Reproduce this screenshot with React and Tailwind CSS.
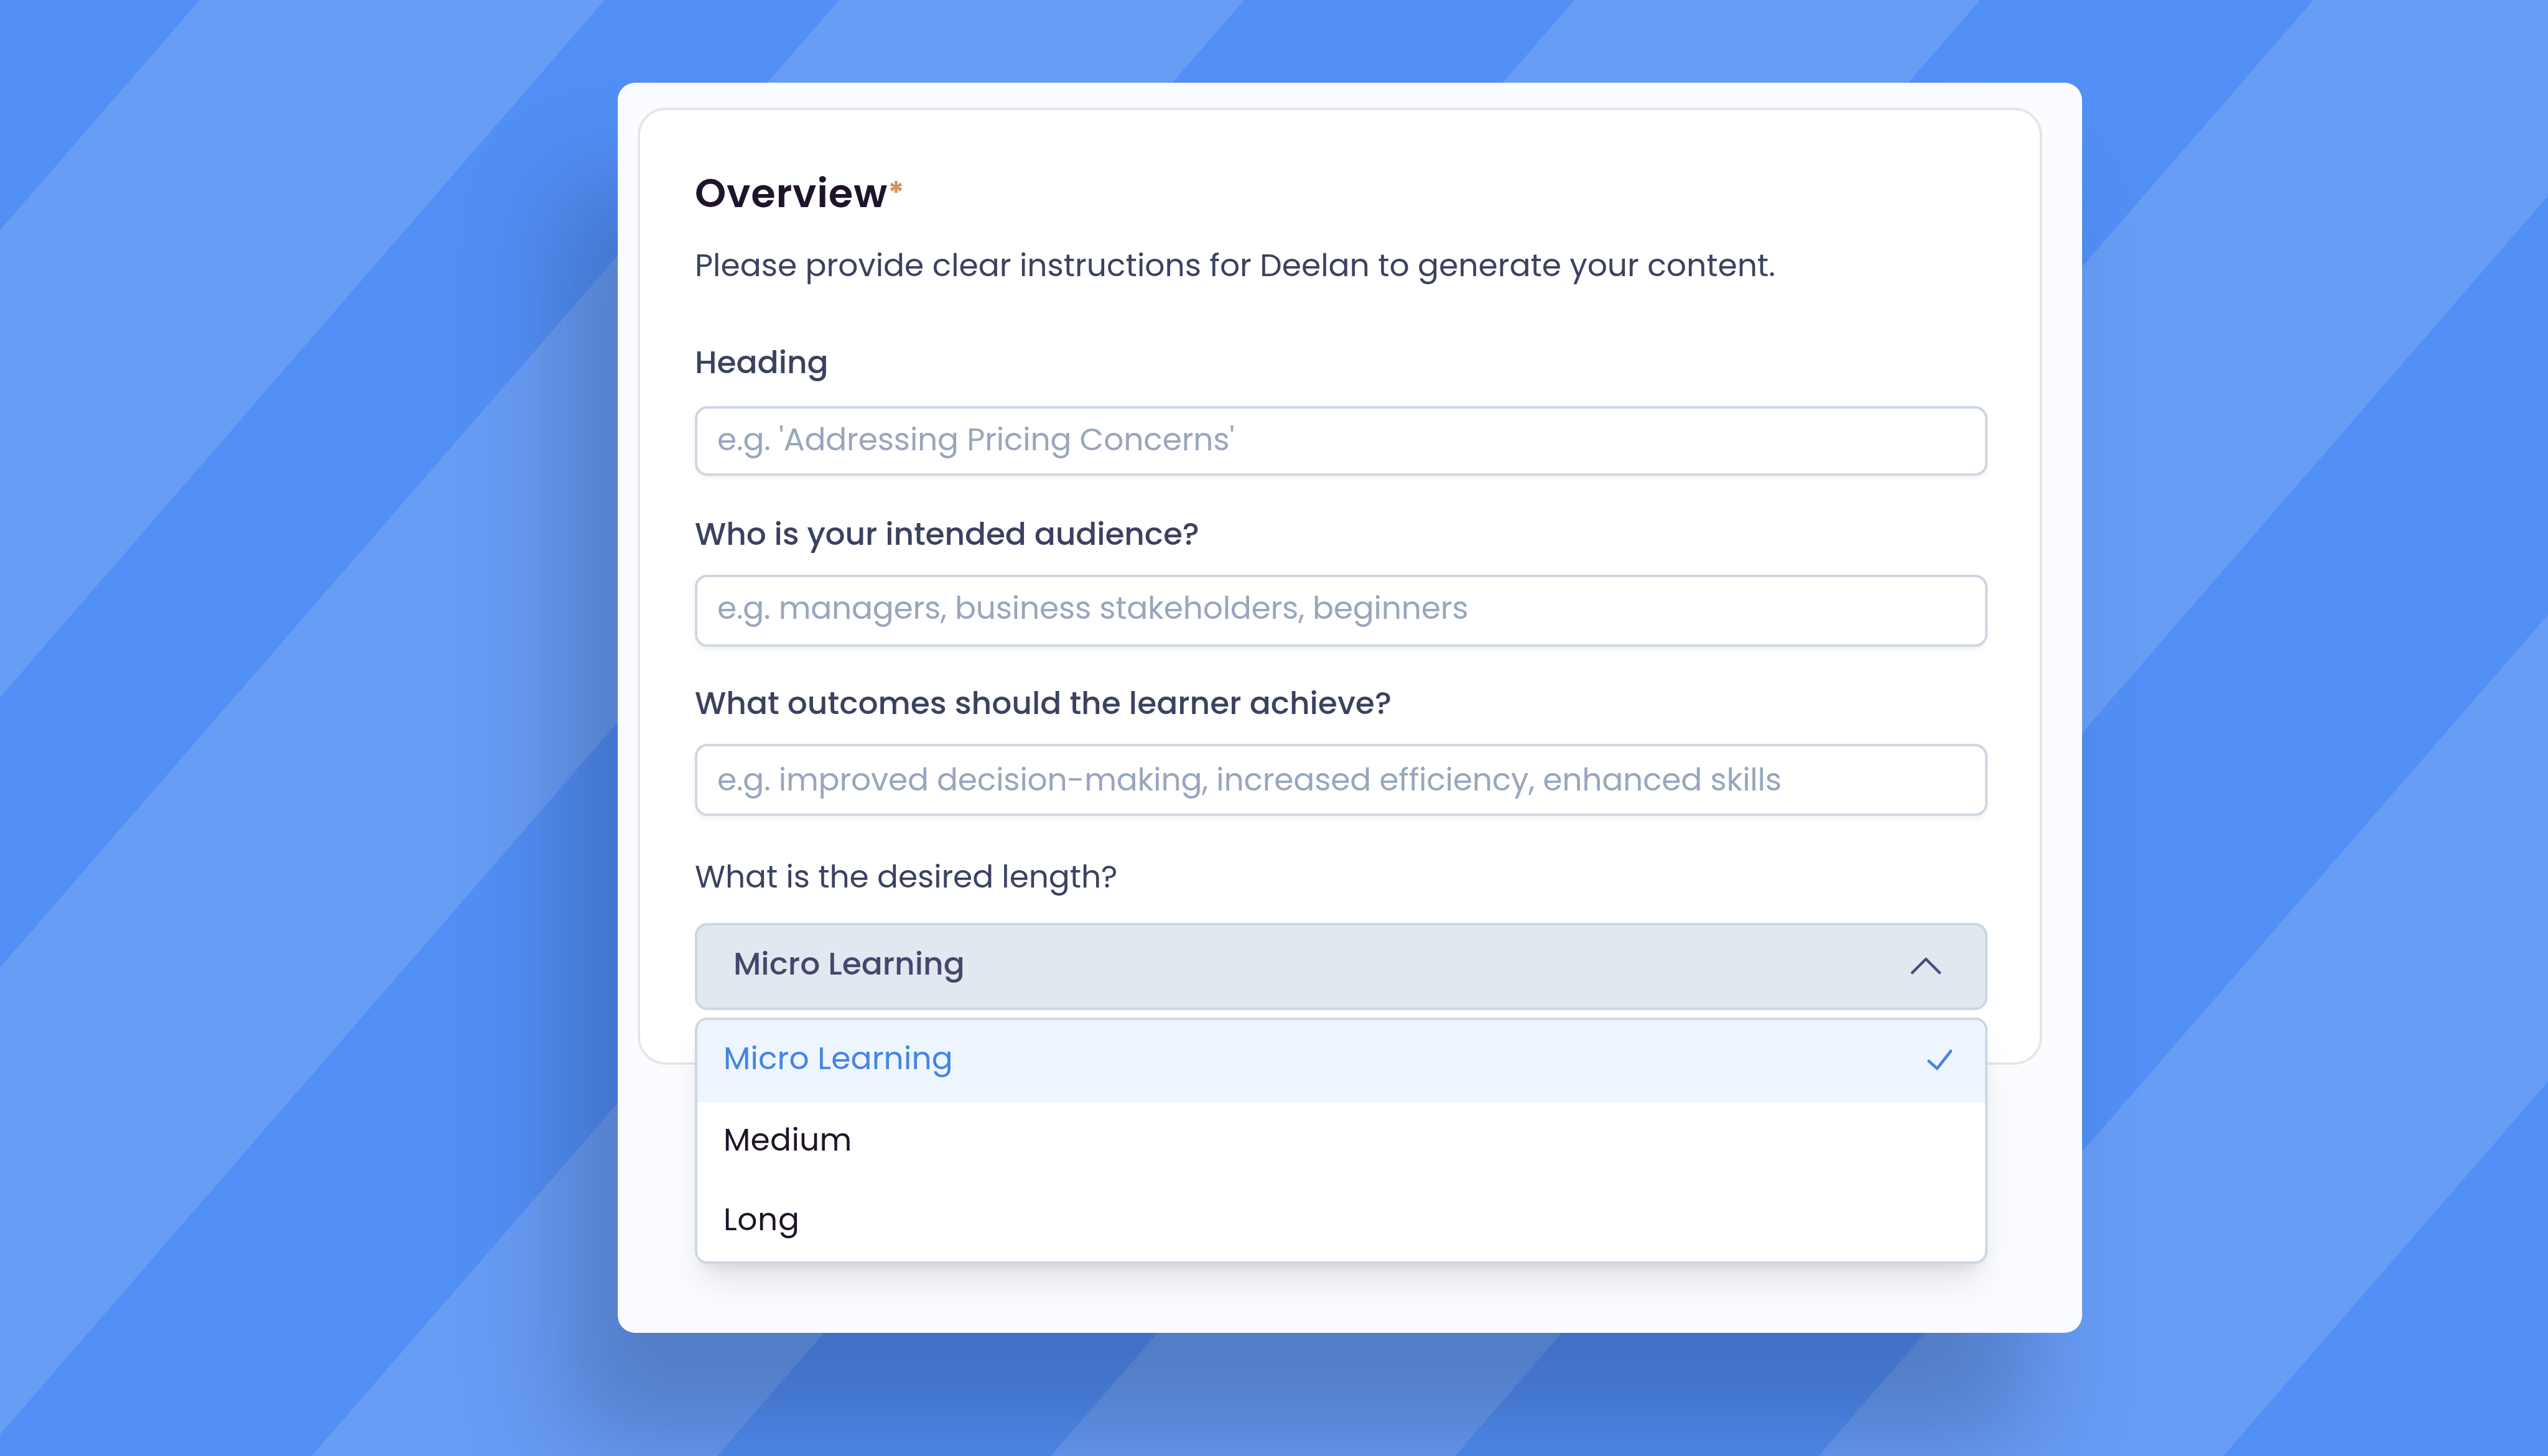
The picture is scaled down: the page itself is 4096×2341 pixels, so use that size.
import React from "react";

// Diagonal bands: x positions of the left and right edge along the top of the page.
const BANDS = [
  [321, 972],
  [1349, 2000],
  [2531, 3183],
  [3719, 4369],
  [4953, 5604],
];
const SHEAR = 2030;

function Backdrop() {
  return (
    <svg className="absolute inset-0 h-[2341px] w-[4096px]" viewBox="0 0 4096 2341" aria-hidden="true">
      {BANDS.map(([a, b]) => (
        <polygon key={a} fill="#689df6" points={`${a},0 ${b},0 ${b - SHEAR},2341 ${a - SHEAR},2341`} />
      ))}
    </svg>
  );
}

function Label({ className = "", children }) {
  return <div className={`h-[72px] whitespace-nowrap leading-[72px] text-[#3b4260] ${className}`}>{children}</div>;
}

function Field({ className = "", children }) {
  return (
    <div
      className={`flex w-[2078px] items-center rounded-[20px] border-4 border-[#cdd7e2] bg-white pl-8 whitespace-nowrap text-[#98a6bd] shadow-[0_4px_8px_rgba(0,0,0,0.06)] ${className}`}
    >
      {children}
    </div>
  );
}

function Menu() {
  return (
    <div className="absolute top-[152px] left-0 flex h-[396px] w-[2078px] flex-col overflow-visible rounded-[20px] border-4 border-[#cdd7e2] bg-white text-[#1f142b] shadow-[0_39px_59px_-12px_rgba(0,0,0,0.1),0_16px_24px_-16px_rgba(0,0,0,0.12)]">
      <div className="flex h-[132px] items-center justify-between rounded-t-[16px] bg-[#edf6fe] pr-[53px] pl-[42px] text-[#4583e6]">
        <span className="pb-[9px] tracking-[0.13px]">Micro Learning</span>
        <svg className="mb-[4px] h-[34px] w-[42px]" viewBox="0 0 42 34" fill="none" stroke="currentColor" strokeWidth="4.500" strokeLinecap="round" strokeLinejoin="round">
          <path d="M4.500 19 L18 31 L40 3" />
        </svg>
      </div>
      <div className="flex h-32 items-center pb-[6px] pl-[42px] tracking-[0.3px]">Medium</div>
      <div className="flex h-32 items-center pb-[6px] pl-[42px] tracking-[0.6px]">Long</div>
    </div>
  );
}

export default function App() {
  return (
    <div className="relative h-[2341px] w-[4096px] overflow-hidden bg-[#528ff5] pt-[133px] pl-[993px] font-['Poppins',Inter,sans-serif] text-[50.3px] font-normal">
      <Backdrop />
      <main className="relative h-[2010px] w-[2354px] rounded-[28px] bg-[#fbfcff] pt-10 pl-8 shadow-[-84px_170px_175px_rgba(0,5,25,0.21)]">
        <section className="h-[1539px] w-[2258px] rounded-[45px] border-4 border-[#e5e7e7] bg-white pt-[94px] pl-[88px]">
          <h1 className="flex h-20 items-start text-[64px] leading-[80px] font-semibold tracking-[0.8px] whitespace-nowrap text-[#1f142b]">
            Overview<span className="text-[50px] font-bold tracking-normal text-[#d68f5b]">*</span>
          </h1>
          <Label className="mt-10">Please provide clear instructions for Deelan to generate your content.</Label>

          <Label className="mt-[84px] font-medium">Heading</Label>
          <Field className="mt-[34px] h-[112px] pb-[5px] tracking-[-0.17px]">e.g. 'Addressing Pricing Concerns'</Field>

          <Label className="mt-[58px] font-medium tracking-[-0.12px]">Who is your intended audience?</Label>
          <Field className="mt-[29px] h-[116px] pb-[8px] tracking-[-0.22px]">e.g. managers, business stakeholders, beginners</Field>

          <Label className="mt-[55px] font-medium">What outcomes should the learner achieve?</Label>
          <Field className="mt-[29px] h-[116px] tracking-[-0.19px]">e.g. improved decision-making, increased efficiency, enhanced skills</Field>

          <Label className="mt-[62px] tracking-[-0.1px]">What is the desired length?</Label>
          <div className="relative mt-[38px] w-[2078px]">
            <div className="flex h-[140px] items-center justify-between rounded-[20px] border-4 border-[#cdd7e2] bg-[#e2e8f0] pr-[70px] pl-[58px] font-medium whitespace-nowrap text-[#45476b]">
              <span className="pb-[9px]">Micro Learning</span>
              <svg className="mb-[3px] h-[28px] w-[50px]" viewBox="0 0 50 28" fill="none" stroke="#4a4c7e" strokeWidth="4.500" strokeLinecap="round" strokeLinejoin="round">
                <path d="M3 25 L25 3 L47 25" />
              </svg>
            </div>
            <Menu />
          </div>
        </section>
      </main>
    </div>
  );
}
